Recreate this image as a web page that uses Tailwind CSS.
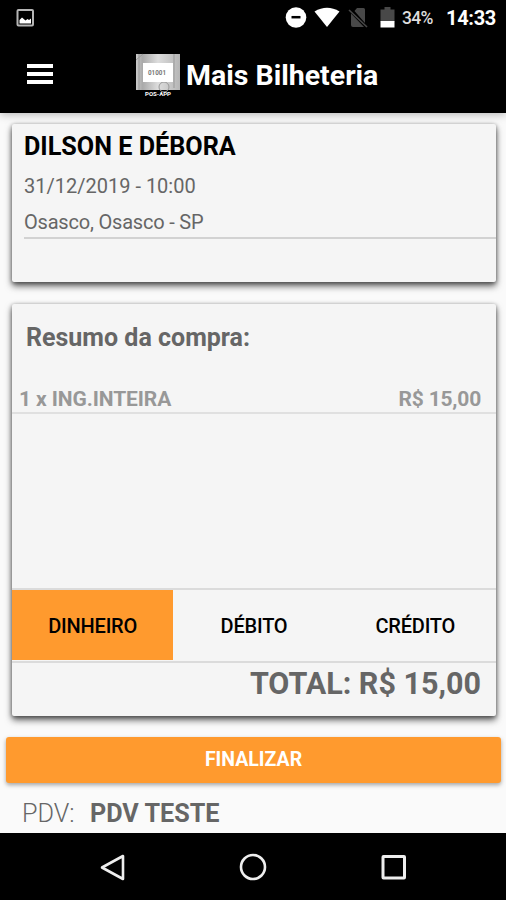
<!DOCTYPE html>
<html lang="pt-BR">
<head>
<meta charset="utf-8">
<title>Mais Bilheteria</title>
<script src="https://cdn.jsdelivr.net/npm/@tailwindcss/browser@4"></script>
</head>
<body class="w-[506px] h-[900px] overflow-hidden bg-[#fafafa] font-[Roboto,sans-serif] whitespace-nowrap flex flex-col">
<header class="h-[113px] shrink-0 bg-black text-white shadow-[0_2px_8px_rgba(0,0,0,.25)]">
  <div class="h-9 flex items-center pl-4 pr-[11px]">
    <svg class="w-[19px] h-[19px]" viewBox="0 0 19 19"><rect x="1.500" y="1" width="15.500" height="15.500" rx="1" fill="none" stroke="#b5b5b5" stroke-width="2"/><path d="M3.500 14.500v-3.500l2.500-2.500 3.500 3 2-1.500 1.500 1L15 9.500v5z" fill="#fff"/></svg>
    <svg class="w-[22px] h-[22px] ml-auto" viewBox="0 0 22 22"><circle cx="11" cy="10.500" r="10.300" fill="#fff"/><path d="M6.500 10.200h9" stroke="#000" stroke-width="2.500"/></svg>
    <svg class="w-[26px] h-[22px] ml-[7px]" viewBox="0 0 26 22"><path d="M.5 4.500Q13-3 25.500 4.500L13 20z" fill="#fff"/></svg>
    <svg class="w-[20px] h-[22px] ml-[8px]" viewBox="0 0 20 22"><path d="M3 6.500V18q0 2 2 2h11zM6.500 4 9 1h6.500q1.500 0 1.500 1.500V16z" fill="#484848"/><path d="m1 3 18 17" stroke="#484848" stroke-width="1.600"/></svg>
    <svg class="w-[15px] h-[22px] ml-[12px]" viewBox="0 0 15 22"><path d="M.5 2.500h4V0h6v2.500h4v12H.5z" fill="#484848"/><path d="M.5 14h14v6.500H.5z" fill="#fff"/></svg>
    <span class="ml-[7px] w-[31px] text-[17.500px] leading-9 tracking-[-0.7px] font-medium text-[#ddd]">34%</span>
    <span class="ml-[13px] w-[49px] text-[20px] leading-9 font-bold tracking-[-0.3px]">14:33</span>
  </div>
  <div class="h-[77px] flex items-center pl-[27px] pb-px">
    <div class="w-[26px] h-[20px] mt-[-1px] flex flex-col justify-between"><i class="h-1 bg-white"></i><i class="h-1 bg-white"></i><i class="h-1 bg-white"></i></div>
    <svg class="w-[46px] h-[46px] ml-[82px] mt-[4px]" viewBox="0 0 46 46">
      <defs><linearGradient id="logo"><stop stop-color="#c9c9c9"/><stop offset=".15" stop-color="#aaa"/><stop offset=".5" stop-color="#ddd"/><stop offset="1" stop-color="#b5b5b5"/></linearGradient></defs>
      <path d="M1 1h44v36H1z" fill="url(#logo)"/><path d="M4 1v36M1 7l7-6M39 1v34" stroke="#999" fill="none"/><circle cx="29" cy="34" r="5" fill="none" stroke="#999"/>
      <path d="M8 10h30v19H8z" fill="#fff"/>
      <text x="13" y="22" font-size="7" font-weight="bold" fill="#777" textLength="18" lengthAdjust="spacingAndGlyphs">01001</text>
      <text x="10" y="43" font-size="6" font-weight="bold" fill="#fff" textLength="26" lengthAdjust="spacingAndGlyphs">POS-APP</text>
    </svg>
    <h1 class="ml-[5px] mt-[3px] text-[28.500px] leading-[40px] font-bold">Mais Bilheteria</h1>
  </div>
</header>
<main class="flex-1 flex flex-col">
  <section class="mt-[11px] ml-3 mr-[10px] h-[158px] shrink-0 rounded-[2px] bg-[#f5f5f5] shadow-[0_4px_7px_rgba(0,0,0,.6),0_1px_4px_rgba(0,0,0,.4)] pl-[12px]">
    <h2 class="pt-[4px] text-[25.200px] leading-[37px] font-bold text-black">DILSON E DÉBORA</h2>
    <p class="mt-[3px] text-[20px] leading-9 text-[#666]">31/12/2019 - 10:00</p>
    <p class="h-[35px] text-[20px] tracking-[-0.2px] leading-[37px] text-[#666] border-b-2 border-[#d2d2d2]">Osasco, Osasco - SP</p>
  </section>
  <section class="mt-[22px] ml-3 mr-[10px] h-[412px] shrink-0 rounded-[2px] bg-[#f5f5f5] shadow-[0_4px_7px_rgba(0,0,0,.6),0_1px_4px_rgba(0,0,0,.4)] flex flex-col">
    <h3 class="pl-[14px] pt-[16px] text-[25px] leading-9 font-bold text-[#666]">Resumo da compra:</h3>
    <div class="mt-[26px] h-[32px] pl-[7px] pr-[15px] flex justify-between text-[21px] tracking-[-0.1px] leading-[35px] font-bold text-[#989898] border-b-2 border-[#e0e0e0]"><span>1 x ING.INTEIRA</span><span class="tracking-[-0.2px]">R$ 15,00</span></div>
    <div class="mt-auto h-[75px] grid grid-cols-3 border-y-2 border-[#dbdbdb] text-[20px] leading-[73px] tracking-[-0.2px] font-medium text-black text-center">
      <div class="bg-[#ff9a2e] h-[70px]">DINHEIRO</div><div>DÉBITO</div><div>CRÉDITO</div>
    </div>
    <p class="h-[53px] pr-[15px] text-right text-[30.500px] leading-[42px] font-bold text-[#666]">TOTAL: R$ 15,00</p>
  </section>
  <button class="mt-[21px] ml-[6px] mr-[5px] h-[46px] shrink-0 rounded-[3px] bg-[#ff9a2e] shadow-[0_2px_4px_rgba(0,0,0,.35)] text-[19.500px] font-bold text-white">FINALIZAR</button>
  <p class="pl-[22px] pt-[12px] text-[25.200px] leading-[37px] text-[#666]"><span class="inline-block w-[68px] font-light">PDV:</span><b>PDV TESTE</b></p>
</main>
<nav class="h-[67px] shrink-0 bg-black flex items-center justify-center gap-[113px]">
  <svg class="w-7 h-7" viewBox="0 0 28 28" fill="none" stroke="#eee" stroke-width="2.600" stroke-linejoin="round"><path d="M25 3v23L4 14.500z"/></svg>
  <svg class="w-7 h-7" viewBox="0 0 28 28" fill="none" stroke="#eee" stroke-width="2.600"><circle cx="14" cy="14" r="12"/></svg>
  <svg class="w-7 h-7" viewBox="0 0 28 28" fill="none" stroke="#eee" stroke-width="3"><rect x="3" y="3.500" width="21.500" height="21.500" rx=".5"/></svg>
</nav>
</body>
</html>
